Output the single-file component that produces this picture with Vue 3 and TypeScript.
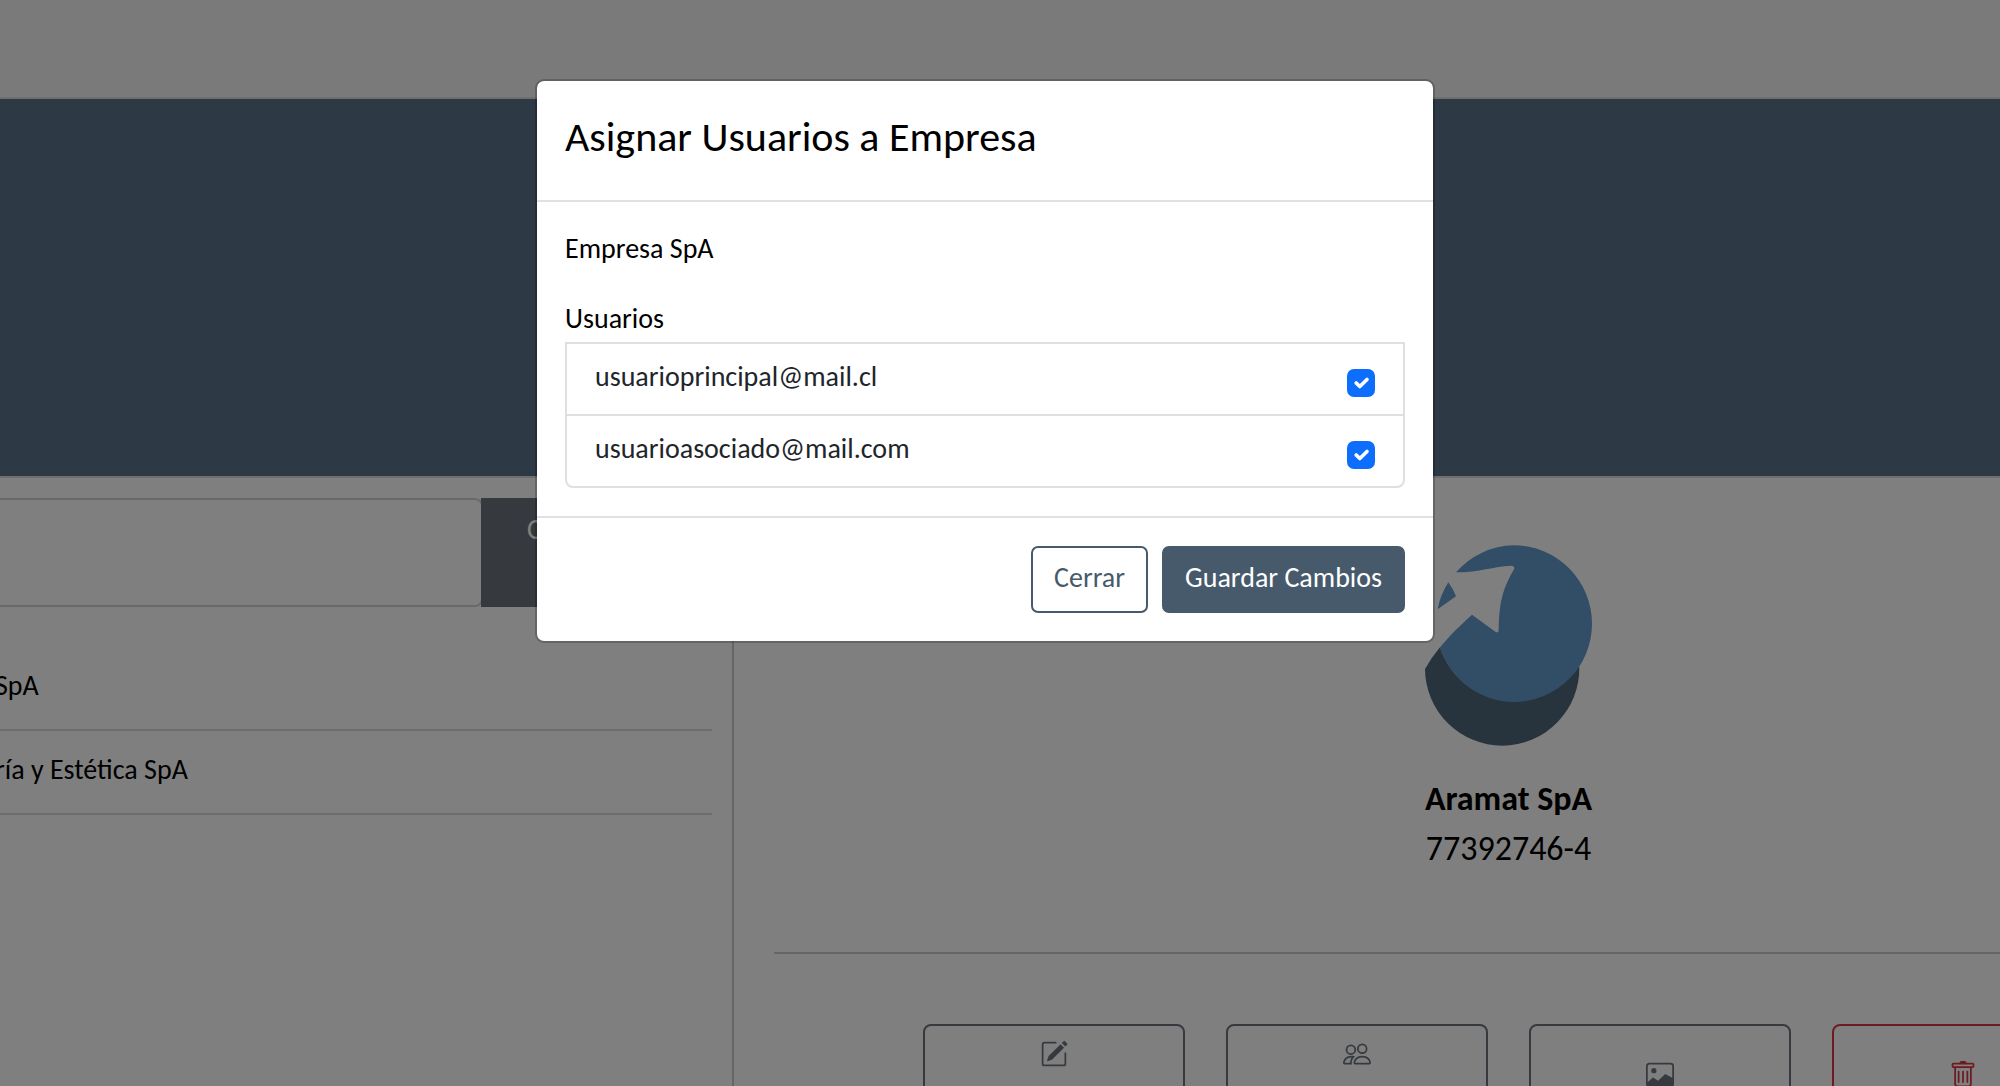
<script setup lang="ts">
import { ref } from 'vue'

interface Usuario {
  id: string
  email: string
  asignado: boolean
}

const usuarios = ref<Usuario[]>([
  { id: 'principal', email: 'usuarioprincipal@mail.cl', asignado: true },
  { id: 'asociado', email: 'usuarioasociado@mail.com', asignado: true },
])

const empresas = ['SpA', 'ría y Estética SpA']
const busqueda = ref('')
</script>

<template>
  <div class="page">
    <header class="topbar"></header>
    <div class="banner"></div>
    <div class="columns">
      <section class="companies">
        <form class="search" @submit.prevent>
          <input v-model="busqueda" class="search-input" type="text" aria-label="Buscar empresa" />
          <button class="search-button" type="submit">Crear</button>
        </form>
        <ul class="company-list">
          <li v-for="empresa in empresas" :key="empresa" class="company">
            <span class="company-name">{{ empresa }}</span>
          </li>
        </ul>
      </section>

      <section class="detail">
        <svg class="logo" viewBox="75 46 501 603" aria-hidden="true">
          <path fill="#50687a" d="M75 418A232 232 0 0 0 307 648A232 232 0 0 0 538 411L341 515A235 235 0 0 1 120 353Q94 384 75 418Z" />
          <path
            fill="#649acd"
            d="M168 128A235 235 0 0 1 341 47A235 235 0 0 1 576 282A235 235 0 0 1 341 517A235 235 0 0 1 120 353C150 316 180 288 216 255L286 306Q296 312 296 300C298 220 306 180 343 117Q343 108 334 108C280 110 240 128 168 128Z"
          />
          <path fill="#649acd" d="M145 158Q160 178 168 200L113 239Q120 198 145 158Z" />
        </svg>
        <h2 class="company-title">Aramat SpA</h2>
        <p class="company-rut">77392746-4</p>
        <hr class="rule" />
        <div class="actions">
          <button class="action" type="button" aria-label="Editar">
            <svg class="icon" viewBox="0 0 16 16" fill="currentColor">
              <path d="M15.502 1.94a.5.5 0 0 1 0 .706L14.459 3.69l-2-2L13.502.646a.5.5 0 0 1 .707 0l1.293 1.293zm-1.75 2.456-2-2L4.939 9.21a.5.5 0 0 0-.121.196l-.805 2.414a.25.25 0 0 0 .316.316l2.414-.805a.5.5 0 0 0 .196-.12z" />
              <path d="M1 13.5A1.5 1.5 0 0 0 2.5 15h11a1.5 1.5 0 0 0 1.5-1.5v-6a.5.5 0 0 0-1 0v6a.5.5 0 0 1-.5.5h-11a.5.5 0 0 1-.5-.5v-11a.5.5 0 0 1 .5-.5H9a.5.5 0 0 0 0-1H2.5A1.5 1.5 0 0 0 1 2.5z" />
            </svg>
          </button>
          <button class="action" type="button" aria-label="Asignar usuarios">
            <svg class="icon" viewBox="0 0 16 16" fill="currentColor">
              <path d="M15 14s1 0 1-1-1-4-5-4-5 3-5 4 1 1 1 1zm-7.978-1L7 12.996c.001-.264.167-1.03.76-1.72C8.312 10.629 9.282 10 11 10c1.717 0 2.687.63 3.24 1.276.593.69.758 1.457.76 1.72l-.008.002-.014.002zM11 7a2 2 0 1 0 0-4 2 2 0 0 0 0 4m3-2a3 3 0 1 1-6 0 3 3 0 0 1 6 0M6.936 9.28a6 6 0 0 0-1.23-.247A7 7 0 0 0 5 9c-4 0-5 3-5 4q0 1 1 1h4.216A2.24 2.24 0 0 1 5 13c0-1.01.377-2.042 1.09-2.904.243-.294.526-.569.846-.816M4.92 10A5.5 5.5 0 0 0 4 13H1c0-.26.164-1.03.76-1.724.545-.636 1.492-1.256 3.16-1.275ZM1.5 5.5a3 3 0 1 1 6 0 3 3 0 0 1-6 0m3-2a2 2 0 1 0 0 4 2 2 0 0 0 0-4" />
            </svg>
          </button>
          <button class="action action-low" type="button" aria-label="Cambiar imagen">
            <svg class="icon" viewBox="0 0 16 16" fill="currentColor">
              <path d="M6.002 5.5a1.5 1.5 0 1 1-3 0 1.5 1.5 0 0 1 3 0" />
              <path d="M2.002 1a2 2 0 0 0-2 2v10a2 2 0 0 0 2 2h12a2 2 0 0 0 2-2V3a2 2 0 0 0-2-2zm12 1a1 1 0 0 1 1 1v6.5l-3.777-1.947a.5.5 0 0 0-.577.093l-3.71 3.71-2.66-1.772a.5.5 0 0 0-.63.062L1.002 12V3a1 1 0 0 1 1-1z" />
            </svg>
          </button>
          <button class="action action-low action-danger" type="button" aria-label="Eliminar">
            <svg class="icon" viewBox="0 0 16 16" fill="currentColor">
              <path d="M5.5 5.5A.5.5 0 0 1 6 6v6a.5.5 0 0 1-1 0V6a.5.5 0 0 1 .5-.5m2.5 0a.5.5 0 0 1 .5.5v6a.5.5 0 0 1-1 0V6a.5.5 0 0 1 .5-.5m3 .5a.5.5 0 0 0-1 0v6a.5.5 0 0 0 1 0z" />
              <path d="M14.5 3a1 1 0 0 1-1 1H13v9a2 2 0 0 1-2 2H5a2 2 0 0 1-2-2V4h-.5a1 1 0 0 1-1-1V2a1 1 0 0 1 1-1H6a1 1 0 0 1 1-1h2a1 1 0 0 1 1 1h3.5a1 1 0 0 1 1 1zM4.118 4 4 4.059V13a1 1 0 0 0 1 1h6a1 1 0 0 0 1-1V4.059L11.882 4zM2.5 3h11V2h-11z" />
            </svg>
          </button>
        </div>
      </section>
    </div>

    <div class="backdrop">
      <div class="modal" role="dialog" aria-modal="true" aria-labelledby="modal-title">
        <div class="modal-header">
          <h1 id="modal-title" class="modal-title">Asignar Usuarios a Empresa</h1>
        </div>
        <div class="modal-body">
          <p class="modal-text">Empresa SpA</p>
          <p class="modal-text">Usuarios</p>
          <ul class="users">
            <li v-for="usuario in usuarios" :key="usuario.id" class="user">
              <label class="user-email" :for="usuario.id">{{ usuario.email }}</label>
              <input :id="usuario.id" v-model="usuario.asignado" class="check" type="checkbox" />
            </li>
          </ul>
        </div>
        <div class="modal-footer">
          <button class="btn btn-outline" type="button">Cerrar</button>
          <button class="btn btn-solid" type="button">Guardar Cambios</button>
        </div>
      </div>
    </div>
  </div>
</template>

<style>
body {
  margin: 0;
  overflow: hidden;
}
</style>

<style scoped>
.page {
  position: relative;
  height: 100vh;
  overflow: hidden;
  background: #fff;
  color: #000;
  font-family: Carlito, Calibri, Lato, sans-serif;
  font-size: 28px;
  line-height: 42px;
}
.page * {
  box-sizing: border-box;
}
button,
input {
  font: inherit;
}
h1,
h2,
p,
ul {
  margin: 0;
  padding: 0;
  font-weight: 400;
}
ul {
  list-style: none;
}
.topbar {
  height: 99px;
  background: #f5f5f5;
  border-bottom: 2px solid #dedede;
}
.banner {
  height: 379px;
  background: #5a738a;
  border-bottom: 2px solid #dedede;
}
.columns {
  display: flex;
  height: 100%;
}
.companies {
  flex: none;
  width: 734px;
  padding: 20px 20px 0 0;
  border-right: 2px solid #ccc;
}
.search {
  display: flex;
  height: 109px;
}
.search-input {
  flex: none;
  width: 483px;
  border: 2px solid #ced4da;
  border-left: 0;
  border-radius: 0 8px 8px 0;
  background: #fff;
}
.search-button {
  z-index: 0;
  display: flex;
  flex: 1;
  margin-left: -2px;
  padding: 11px 46px;
  border: 0;
  background: #6c757d;
  color: #fff;
}
.company-list {
  padding-top: 40px;
}
.company {
  height: 84px;
  padding-top: 18px;
  border-bottom: 2px solid #d9d9d9;
}
.company-name {
  display: block;
  margin-left: -5px;
}
.detail {
  flex: 1;
  min-width: 0;
  margin-right: -283px;
  padding: 67px 40px 0;
  text-align: center;
}
.logo {
  display: block;
  width: 167px;
  height: 201px;
  margin: 0 auto;
  overflow: visible;
}
.company-title {
  margin-top: 28px;
  font-size: 34px;
  font-weight: 700;
  line-height: 50px;
}
.company-rut {
  font-size: 34px;
  line-height: 50px;
}
.rule {
  height: 2px;
  margin: 78px 0 70px;
  border: 0;
  background: #ccc;
}
.actions {
  display: flex;
  justify-content: center;
  gap: 41px;
}
.action {
  display: flex;
  justify-content: center;
  align-items: flex-start;
  width: 262px;
  height: 120px;
  padding: 14px 12px;
  border: 2px solid #6c757d;
  border-radius: 8px;
  background: #fff;
  color: #6c757d;
}
.action-low {
  padding-top: 35px;
}
.action-danger {
  border-color: #dc3545;
  color: #dc3545;
}
.icon {
  width: 28px;
  height: 28px;
}
.backdrop {
  position: absolute;
  inset: 0;
  padding: 79px 30px 0 0;
  background: rgba(0, 0, 0, 0.5);
}
.modal {
  max-width: 900px;
  margin: 0 auto;
  border: 2px solid rgba(0, 0, 0, 0.2);
  border-radius: 9px;
  background: #fff;
  background-clip: padding-box;
}
.modal-header {
  padding: 26px 28px 33px;
  border-bottom: 2px solid #dee2e6;
}
.modal-title {
  font-size: 42px;
  line-height: 60px;
}
.modal-body {
  padding: 26px 28px 28px;
}
.modal-text + .modal-text {
  margin: 28px 0 2px;
}
.users {
  border: 2px solid #dfdfdf;
  border-radius: 0 0 8px 8px;
}
.user {
  display: flex;
  justify-content: space-between;
  align-items: flex-start;
  height: 70px;
  padding: 12px 28px;
}
.user + .user {
  height: 72px;
  border-top: 2px solid #dfdfdf;
}
.user-email {
  color: #212529;
}
.check {
  appearance: none;
  width: 28px;
  height: 28px;
  margin: 13px 0 0;
  border: 2px solid #dee2e6;
  border-radius: 7px;
}
.check:checked {
  border-color: #0d6efd;
  background: #0d6efd url("data:image/svg+xml,%3Csvg xmlns='http://www.w3.org/2000/svg' viewBox='0 0 20 20'%3E%3Cpath fill='none' stroke='%23fff' stroke-linecap='round' stroke-linejoin='round' stroke-width='3' d='m6 10 3 3 6-6'/%3E%3C/svg%3E") center / contain no-repeat;
}
.modal-footer {
  display: flex;
  justify-content: flex-end;
  gap: 14px;
  padding: 28px;
  border-top: 2px solid #dee2e6;
}
.btn {
  height: 67px;
  padding: 9px 21px 12px;
  border: 2px solid #475a6c;
  border-radius: 7px;
}
.btn-outline {
  background: #fff;
  color: #475a6c;
}
.btn-solid {
  background: #475a6c;
  color: #fff;
}
</style>
